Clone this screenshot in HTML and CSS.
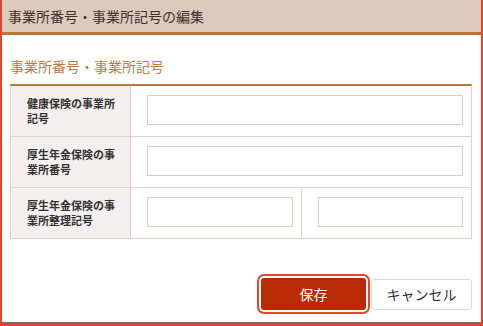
FILE: index.html
```html
<!DOCTYPE html>
<html>
<head>
    <title>事業所番号・事業所記号の編集</title>
    <link rel="stylesheet" href="styles.css">
</head>
<body>
    <div class="frame">
        <div class="dialog">
            <div class="dialog-header">事業所番号・事業所記号の編集</div>
            <div class="dialog-body">
                <h2 class="section-title">事業所番号・事業所記号</h2>
                <div class="form-table">
                    <div class="form-row">
                        <div class="form-label">健康保険の事業所記号</div>
                        <div class="form-field">
                            <input type="text" class="text-input" name="kenpoKigo">
                        </div>
                    </div>
                    <div class="form-row">
                        <div class="form-label">厚生年金保険の事業所番号</div>
                        <div class="form-field">
                            <input type="text" class="text-input" name="kouseiBango">
                        </div>
                    </div>
                    <div class="form-row">
                        <div class="form-label">厚生年金保険の事業所整理記号</div>
                        <div class="form-field split">
                            <div class="sub-field">
                                <input type="text" class="text-input" name="seiriKigo1">
                            </div>
                            <div class="sub-field">
                                <input type="text" class="text-input" name="seiriKigo2">
                            </div>
                        </div>
                    </div>
                </div>
                <div class="actions">
                    <button type="submit" class="btn btn-primary">保存</button>
                    <button type="button" class="btn btn-secondary">キャンセル</button>
                </div>
            </div>
        </div>
    </div>
</body>
</html>
```

FILE: styles.css
```css
:root {
    --frame-color: #e5452c;      /* focus red */
    --header-bg: #dccabd;        /* sand */
    --accent-brown: #b9773b;     /* header bar / table top */
    --title-color: #c27d3d;      /* section title */
    --label-bg: #f5eff0;
    --line-color: #e2d2c6;
    --text-color: #333333;
    --primary: #b92b07;
}
* {
    box-sizing: border-box;
}
body {
    margin: 0;
    font-family: "Noto Sans CJK JP", "Noto Sans", sans-serif;
    color: var(--text-color);
    background: #ffffff;
}
.frame {
    width: 483px;
    height: 326px;
    border: 2px solid var(--frame-color);
    border-top: 0;
}
.dialog {
    height: 324px;
    border-bottom: 2px solid #6e6e6e;
    display: flex;
    flex-direction: column;
}
.dialog-header {
    height: 35px;
    line-height: 32px;
    padding-left: 6px;
    background: var(--header-bg);
    border-bottom: 3px solid var(--accent-brown);
    font-size: 14px;
    color: #3a3330;
}
.dialog-body {
    padding: 21px 9px 0 8px;
}
.section-title {
    margin: 0 0 8px;
    font-size: 14px;
    font-weight: normal;
    line-height: 20px;
    color: var(--title-color);
}
.form-table {
    border-top: 2px solid var(--accent-brown);
    border-left: 1px solid var(--line-color);
    border-right: 1px solid var(--line-color);
}
.form-row {
    display: flex;
    height: 51px;
    border-bottom: 1px solid var(--line-color);
}
.form-label {
    flex: 0 0 120px;
    padding: 0 10px 0 16px;
    display: flex;
    align-items: center;
    background: var(--label-bg);
    border-right: 1px solid #dccdc5;
    font-size: 11px;
    font-weight: bold;
    line-height: 15px;
}
.form-field {
    flex: 1;
    min-width: 0;
    display: flex;
    padding: 9px 8px 11px 16px;
}
.form-field.split {
    padding: 0;
}
.sub-field {
    flex: 1 1 0;
    min-width: 0;
    display: flex;
    padding: 9px 8px 11px 16px;
}
.sub-field + .sub-field {
    border-left: 1px solid var(--line-color);
}
.text-input {
    flex: 1;
    width: 0;
    min-width: 0;
    height: 30px;
    margin: 0;
    border: 1px solid #dfcdc0;
    background: #ffffff;
    font-family: inherit;
}
.text-input:focus {
    outline: none;
    border-color: var(--accent-brown);
}
.actions {
    display: flex;
    justify-content: flex-end;
    align-items: center;
    gap: 5px;
    margin-top: 39px;
}
.btn {
    font-family: inherit;
    font-size: 14px;
    cursor: pointer;
    border-radius: 3px;
}
.btn-primary {
    width: 105px;
    height: 32px;
    background: var(--primary);
    color: #ffffff;
    border: none;
    box-shadow: 0 0 0 2px #ffffff, 0 0 0 4px var(--frame-color);
}
.btn-secondary {
    width: 101px;
    height: 31px;
    background: #ffffff;
    color: var(--text-color);
    border: 1px solid #e2d8d3;
}
```
